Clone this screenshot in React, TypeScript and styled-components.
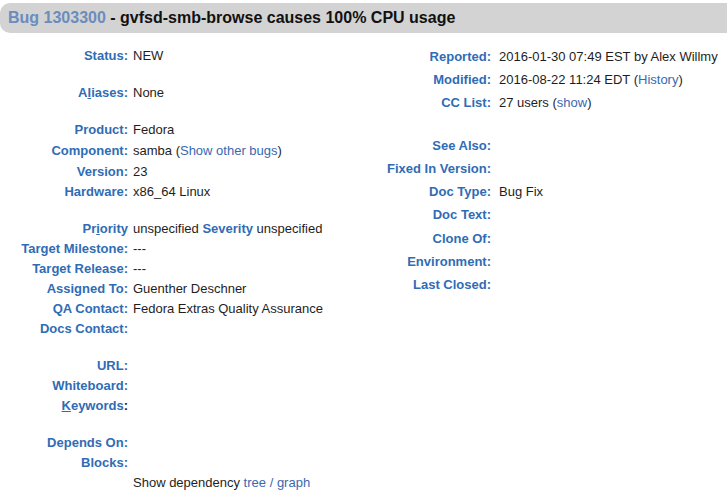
import React from 'react'
import styled, { createGlobalStyle } from 'styled-components'

const GlobalStyle = createGlobalStyle`
  body {
    margin: 0;
    background: #ffffff;
    font-family: "Liberation Sans", Arial, sans-serif;
    font-size: 13px;
    color: #1e1e1e;
  }
`

const Page = styled.div`
  width: 727px;
  overflow: hidden;
`

const SummaryBar = styled.div`
  margin-top: 3px;
  height: 30px;
  line-height: 30px;
  padding-left: 8px;
  background: #d3d3d3;
  border-radius: 10px 0 0 10px;
  font-size: 16px;
  font-weight: bold;
  color: #111;
  white-space: nowrap;
`

const BugLink = styled.a`
  color: #6a8dbd;
  text-decoration: none;
`

const Columns = styled.div`
  display: flex;
  margin-top: 12px;
`

interface PanelProps {
  width?: number
  offset?: number
}

const Panel = styled.div<PanelProps>`
  display: flex;
  flex-direction: column;
  width: ${(p) => (p.width ? `${p.width}px` : 'auto')};
  flex: ${(p) => (p.width ? 'none' : '1')};
  padding-top: ${(p) => p.offset || 0}px;
`

interface RowProps {
  height: number
}

const Row = styled.div<RowProps>`
  display: flex;
  height: ${(p) => p.height}px;
  line-height: ${(p) => p.height}px;
  white-space: nowrap;
`

const Spacer = styled.div<RowProps>`
  height: ${(p) => p.height}px;
`

interface LabelProps {
  width: number
  gap: number
}

const Label = styled.div<LabelProps>`
  width: ${(p) => p.width}px;
  margin-right: ${(p) => p.gap}px;
  text-align: right;
  font-weight: bold;
  color: #2f6cb5;
  flex: none;
`

const Key = styled.span`
  text-decoration: underline;
`

const Dark = styled.span`
  color: #1e1e1e;
`

const Value = styled.div`
  flex: 1;
`

const InlineLabel = styled.span`
  font-weight: bold;
  color: #2f6cb5;
`

const Link = styled.a`
  color: #3a68b0;
  text-decoration: none;
`

const LEFT = { width: 128, gap: 5 }
const RIGHT = { width: 131, gap: 8 }

const Field: React.FC<{
  label: React.ReactNode
  side: { width: number; gap: number }
  height: number
  children?: React.ReactNode
}> = ({ label, side, height, children }) => (
  <Row height={height}>
    <Label width={side.width} gap={side.gap}>
      {label}
    </Label>
    <Value>{children}</Value>
  </Row>
)

const App: React.FC = () => {
  return (
    <Page>
      <GlobalStyle />
      <SummaryBar>
        <BugLink href="#">Bug 1303300</BugLink> - gvfsd-smb-browse causes 100% CPU usage
      </SummaryBar>
      <Columns>
        <Panel width={360} offset={1}>
          <Field label="Status:" side={LEFT} height={20}>NEW</Field>
          <Spacer height={17} />
          <Field label={<>A<Key>l</Key>iases:</>} side={LEFT} height={20}>None</Field>
          <Spacer height={17} />
          <Field label="Product:" side={LEFT} height={20}>Fedora</Field>
          <Field label="Component:" side={LEFT} height={22}>
            samba (<Link href="#">Show other bugs</Link>)
          </Field>
          <Field label="Version:" side={LEFT} height={20}>23</Field>
          <Field label="Hardware:" side={LEFT} height={20}>x86_64 Linux</Field>
          <Spacer height={17} />
          <Field label={<>Pr<Key>i</Key>ority</>} side={LEFT} height={20}>
            unspecified <InlineLabel>Severity</InlineLabel> unspecified
          </Field>
          <Field label="Target Milestone:" side={LEFT} height={20}>---</Field>
          <Field label="Target Release:" side={LEFT} height={20}>---</Field>
          <Field label="Assigned To:" side={LEFT} height={20}>Guenther Deschner</Field>
          <Field label="QA Contact:" side={LEFT} height={20}>Fedora Extras Quality Assurance</Field>
          <Field label="Docs Contact:" side={LEFT} height={20} />
          <Spacer height={17} />
          <Field label="URL:" side={LEFT} height={20} />
          <Field label="Whiteboard:" side={LEFT} height={20} />
          <Field label={<><Key>K</Key>eywords<Dark>:</Dark></>} side={LEFT} height={20} />
          <Spacer height={17} />
          <Field label="Depends On:" side={LEFT} height={20} />
          <Field label="Blocks:" side={LEFT} height={20} />
          <Field label="" side={LEFT} height={20}>
            Show dependency <Link href="#">tree</Link> <Link href="#">/</Link>{' '}
            <Link href="#">graph</Link>
          </Field>
        </Panel>
        <Panel>
          <Field label="Reported:" side={RIGHT} height={23}>
            2016-01-30 07:49 EST by Alex Willmy
          </Field>
          <Field label="Modified:" side={RIGHT} height={23}>
            2016-08-22 11:24 EDT (<Link href="#">History</Link>)
          </Field>
          <Field label="CC List:" side={RIGHT} height={23}>
            27 users (<Link href="#">show</Link>)
          </Field>
          <Spacer height={20} />
          <Field label="See Also:" side={RIGHT} height={23} />
          <Field label="Fixed In Version:" side={RIGHT} height={23} />
          <Field label="Doc Type:" side={RIGHT} height={23}>Bug Fix</Field>
          <Field label="Doc Text:" side={RIGHT} height={24} />
          <Field label="Clone Of:" side={RIGHT} height={23} />
          <Field label="Environment:" side={RIGHT} height={23} />
          <Field label="Last Closed:" side={RIGHT} height={23} />
        </Panel>
      </Columns>
    </Page>
  )
}

export default App
